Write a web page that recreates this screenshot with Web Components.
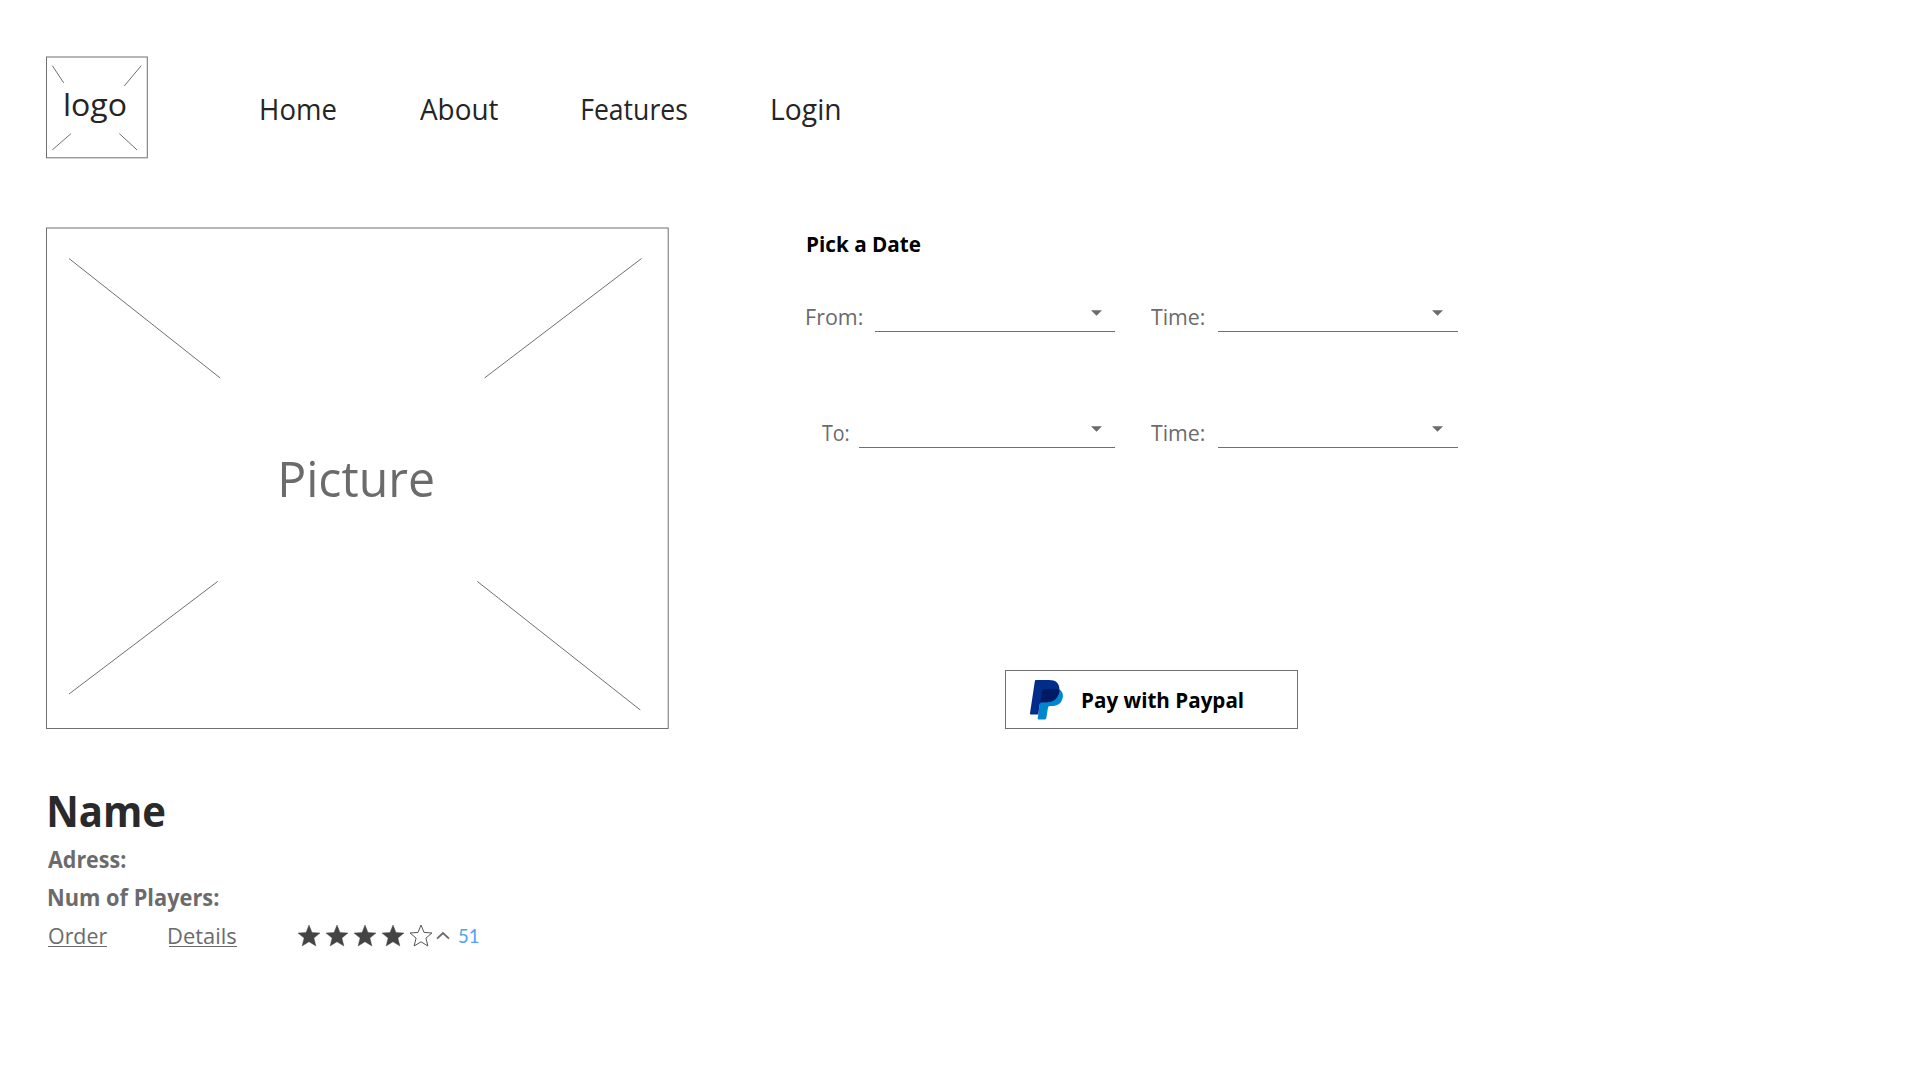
<!DOCTYPE html>
<html lang="en">
<head>
<meta charset="utf-8">
<title>Booking</title>
<style>
html,body{margin:0;background:#fff}
body{width:1920px;height:1080px;overflow:hidden;font-family:"Open Sans","Noto Sans",sans-serif}
</style>
</head>
<body>
<booking-page></booking-page>
<script>
const make = (host, html) => { host.attachShadow({mode:'open'}).innerHTML = html; };
const ctx = document.createElement('canvas').getContext('2d');

/* A line of text whose visible glyphs span exactly `w` pixels; its baseline is the bottom of the box. */
class FitText extends HTMLElement {
  connectedCallback() {
    const w = +this.getAttribute('w'), s = +this.getAttribute('size');
    const wt = this.getAttribute('weight') || '400', fam = this.getAttribute('family') || 'Open Sans';
    const k = fam === 'Lato' ? 0.774 : 0.776;
    ctx.font = `${wt} ${s}px "${fam}"`;
    const m = ctx.measureText(this.textContent);
    const ink = m.actualBoundingBoxLeft + m.actualBoundingBoxRight;
    const sx = w / ink, dx = m.actualBoundingBoxLeft * sx;
    make(this, `<style>
      :host{display:block;flex:none;width:${w}px;height:${s*k}px}
      span{display:block;width:max-content;white-space:pre;font:${wt} ${s}px/${s*k}px "${fam}",sans-serif;
        transform-origin:0 0;transform:translateX(${dx}px) scaleX(${sx})}
    </style><span><slot></slot></span>`);
  }
}
customElements.define('fit-text', FitText);

customElements.define('logo-box', class extends HTMLElement {
  connectedCallback() {
    make(this, `<style>
      :host{display:block;position:relative;box-sizing:border-box;width:102px;height:102px;padding:36.2px 0 0 19px;color:#252525}
      svg{position:absolute;left:0;top:0;overflow:visible}
    </style>
    <svg width="102" height="102" fill="none" stroke="#707070">
      <rect x=".5" y="1" width="100.8" height="100.8"/>
      <path d="M6.3 9.6 17.7 26.9M95.3 9.6 78.3 29.9M6.3 93.9 25 77.6M73.3 77.6 91 93.9"/>
    </svg><slot></slot>`);
  }
});

customElements.define('site-nav', class extends HTMLElement {
  connectedCallback() {
    make(this, `<style>
      :host{display:flex;color:#252525}
      fit-text+fit-text{margin-left:84.2px}
      fit-text+fit-text.f{margin-left:84.4px}
      fit-text+fit-text.l{margin-left:85px}
    </style>
    <fit-text w="74.5" size="29.3">Home</fit-text>
    <fit-text w="78" size="29.3">About</fit-text>
    <fit-text class="f" w="105" size="29.3">Features</fit-text>
    <fit-text class="l" w="67.7" size="29.3">Login</fit-text>`);
  }
});

customElements.define('picture-box', class extends HTMLElement {
  connectedCallback() {
    make(this, `<style>
      :host{display:block;position:relative;box-sizing:border-box;width:623px;height:501px;padding:231.2px 0 0 235px;color:#6b6b6b}
      svg{position:absolute;left:0;top:0;overflow:visible}
    </style>
    <svg width="623" height="501" fill="none" stroke="#707070">
      <rect x=".5" y="0" width="621.7" height="500.5"/>
      <path d="M23 30.5 174.2 150M595.5 30.5 438.5 150M23 466 171.7 353.4M431.3 353.4 594.3 482"/>
    </svg><slot></slot>`);
  }
});

customElements.define('star-rating', class extends HTMLElement {
  connectedCallback() {
    const n = +this.getAttribute('value');
    const pts = '11,0 14,7.4 22,8 15.9,13.1 17.9,21 11,16.8 4.1,21 6.1,13.1 0,8 8,7.4';
    const stars = [0,1,2,3,4].map(i => `<svg width="22" height="21"><polygon points="${pts}" stroke-linejoin="round" ${i < n ? 'fill="#444" stroke="#444" stroke-width=".4"' : 'fill="none" stroke="#555" stroke-width="1"'}/></svg>`).join('');
    make(this, `<style>
      :host{display:flex;align-items:flex-start}
      svg{display:block;flex:none;overflow:visible;margin-right:5.9px}
      svg.up{margin:7.3px 8.4px 0 0}
      fit-text{color:#4da1f8;margin-top:4px}
    </style>${stars}<svg class="up" width="13" height="7"><path d="M0 6.6 6 1 12 6.6" fill="none" stroke="#6b6b6b" stroke-width="1.9"/></svg>
    <fit-text w="19.5" size="18.8" family="Lato">${this.getAttribute('count')}</fit-text>`);
  }
});

customElements.define('place-info', class extends HTMLElement {
  connectedCallback() {
    make(this, `<style>
      :host{display:block;color:#6b6b6b}
      .name{color:#2a2a2a;margin-left:2.6px}
      .row{display:flex;align-items:flex-start;margin:20.5px 0 0 2px}
      .link{border-bottom:1px solid #6b6b6b;padding:0 .5px 2px;height:17.3px}
      .link+.link{margin-left:61.8px}
      star-rating{margin:-1.9px 0 0 61.2px}
    </style>
    <fit-text class="name" w="115.7" size="43" weight="700">Name</fit-text>
    <fit-text style="margin:24px 0 0 2.4px" w="77.9" size="22.3" weight="700">Adress:</fit-text>
    <fit-text style="margin:20.8px 0 0 3.4px" w="170" size="22.3" weight="700">Num of Players:</fit-text>
    <div class="row">
      <div class="link"><fit-text w="58" size="22.3">Order</fit-text></div>
      <div class="link"><fit-text w="67" size="22.3">Details</fit-text></div>
      <star-rating value="4" count="51"></star-rating>
    </div>`);
  }
});

/* Labelled dropdown with an underline. */
customElements.define('select-field', class extends HTMLElement {
  connectedCallback() {
    const a = n => this.getAttribute(n);
    make(this, `<style>
      :host{display:flex;height:24px;align-items:flex-start;color:#6b6b6b}
      .line{display:flex;justify-content:flex-end;box-sizing:border-box;width:${a('line')}px;height:24px;margin-left:${a('gap')}px;border-bottom:1px solid #707070;padding:2px ${a('pad')}px 0 0}
      svg{display:block}
    </style>
    <fit-text w="${a('w')}" size="22.3">${a('label')}</fit-text>
    <div class="line"><svg width="11" height="6"><path d="M0 .2H11L5.5 5.8Z" fill="#6b6b6b"/></svg></div>`);
  }
});

customElements.define('pay-button', class extends HTMLElement {
  connectedCallback() {
    make(this, `<style>
      :host{display:flex;box-sizing:border-box;align-items:flex-start;width:293px;height:59px;border:1px solid #707070;padding:9px 0 0 24px;color:#000}
      svg{display:block;flex:none}
      ::slotted(fit-text){margin:10.8px 0 0 19.3px}
    </style>
    <svg width="33" height="40" viewBox="0 0 33 40">
      <path d="M12 9.5H29.5C32.4 11.7 33.4 14.3 32.7 17.7C31.5 23.5 27.5 26 21.5 26H20C19 26 18.2 26.6 18 27.6L16.3 38C16.2 38.9 15.6 39.4 14.8 39.4H8.7C8 39.4 7.6 39 7.7 38.3Z" fill="#0085cf"/>
      <path d="M6.4 0H19C26.5 0 30.2 4 29.3 11C28.2 18.4 23.6 22.2 16.5 22.2H12.2C10.8 22.2 10 22.8 9.8 24L8.2 34.5H1.2C.3 34.5-.1 34 0 33.2L4.8 1.4C5 .5 5.5 0 6.4 0Z" fill="#002d8a"/>
      <path d="M13.6 9.2H26.5C27.6 9.2 28.7 9.5 29.5 10.2C28.5 18.2 23.8 22.2 16.5 22.2H12.2C11.4 22.2 10.8 22.4 10.4 22.8L12.2 10.5C12.3 9.7 12.8 9.2 13.6 9.2Z" fill="#001a64"/>
    </svg>
    <slot></slot>`);
  }
});

customElements.define('date-form', class extends HTMLElement {
  connectedCallback() {
    make(this, `<style>
      :host{display:block}
      .row{display:flex;margin-top:55.7px}
      .row+.row{margin:92px 0 0 14.5px}
      .time{margin-left:35.4px}
      pay-button{margin:222px 0 0 198px}
    </style>
    <fit-text w="114" size="22" weight="700">Pick a Date</fit-text>
    <div class="row">
      <select-field label="From:" w="55.5" gap="12.8" line="240" pad="13.2"></select-field>
      <select-field class="time" label="Time:" w="53.6" gap="13.2" line="240" pad="14.7"></select-field>
    </div>
    <div class="row">
      <select-field label="To:" w="27" gap="10.8" line="256" pad="13.2"></select-field>
      <select-field class="time" label="Time:" w="53.6" gap="13.2" line="240" pad="14.7"></select-field>
    </div>
    <pay-button><fit-text w="160.5" size="22" weight="700">Pay with Paypal</fit-text></pay-button>`);
  }
});

customElements.define('booking-page', class extends HTMLElement {
  connectedCallback() {
    make(this, `<style>
      :host{display:block;box-sizing:border-box;width:1920px;height:1080px;padding:56px 0 0 46px}
      header{display:flex;align-items:flex-start}
      site-nav{margin:42.3px 0 0 113.3px}
      main{display:flex;align-items:flex-start;margin-top:70px}
      place-info{margin-top:64.5px}
      date-form{margin:7.2px 0 0 138.2px}
    </style>
    <header>
      <logo-box><fit-text w="61" size="31.5">logo</fit-text></logo-box>
      <site-nav></site-nav>
    </header>
    <main>
      <section>
        <picture-box><fit-text w="152" size="50">Picture</fit-text></picture-box>
        <place-info></place-info>
      </section>
      <date-form></date-form>
    </main>`);
  }
});
</script>
</body>
</html>
